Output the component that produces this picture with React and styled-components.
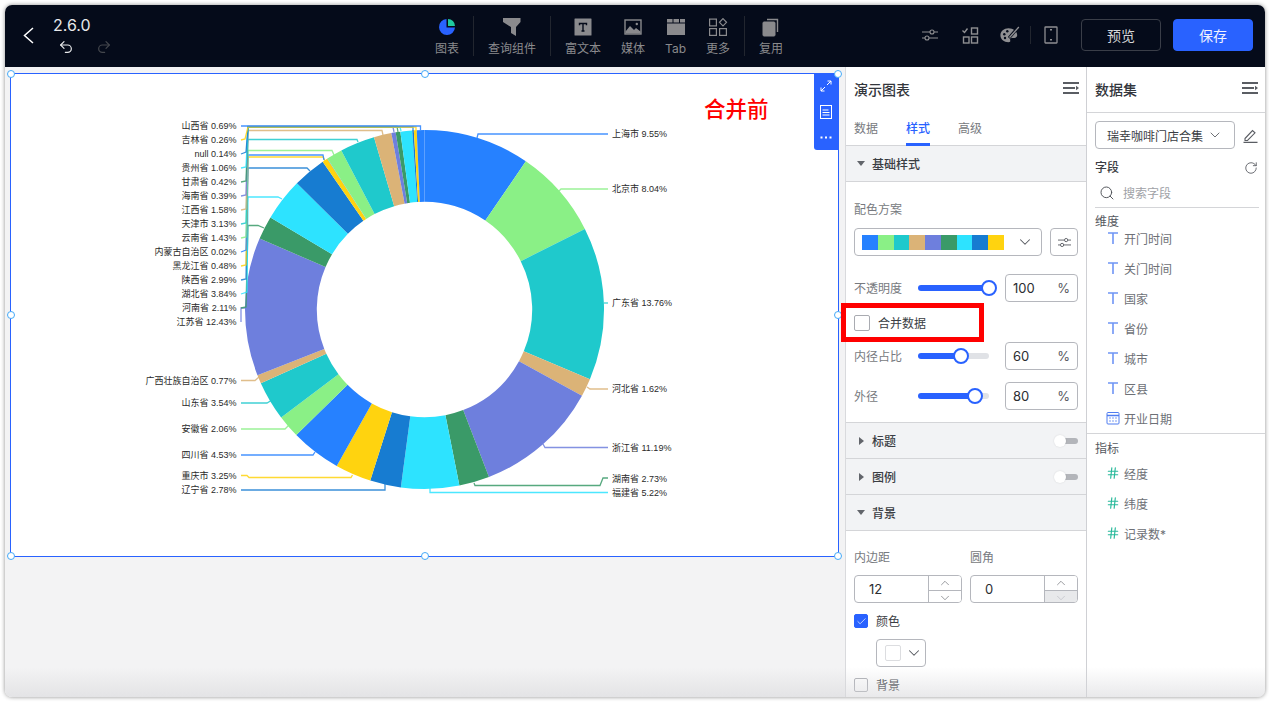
import React from 'react'
import styled, { createGlobalStyle } from 'styled-components'
import { ChevronDown, ChevronUp, Undo2, Redo2, Search, RotateCw, Check, Hash } from 'lucide-react'

const Global = createGlobalStyle`
html, body { margin: 0; height: 702px; overflow: hidden; background: #fff; }
body { font-family: Inter, "Noto Sans CJK SC", sans-serif; font-size: 12px; color: #333; }
* { box-sizing: border-box; }
`

const BLUE = '#2962ff'
const C = {
  blue: '#2681ff', green: '#8af086', teal: '#1fc9cc', tan: '#dbb377', purple: '#6e7fdd',
  dkgreen: '#3a9a68', bright: '#2de3ff', dkblue: '#177cd1', yellow: '#ffd30f',
}
const PALETTE = [C.blue, C.green, C.teal, C.tan, C.purple, C.dkgreen, C.bright, C.dkblue, C.yellow]

// clockwise from 12 o'clock, points are the leader line in page coordinates
const SLICES = [
  ['上海市', 9.55, 'r', 134, [[608, 134], [478, 134], [477, 138]]],
  ['北京市', 8.04, 'r', 189, [[608, 189], [561, 189], [559, 191]]],
  ['广东省', 13.76, 'r', 303, [[608, 303], [604, 303]]],
  ['河北省', 1.62, 'r', 389, [[608, 389], [590, 389], [587, 387]]],
  ['浙江省', 11.19, 'r', 448, [[608, 447.5], [545, 447.5], [543, 444]]],
  ['湖南省', 2.73, 'r', 479, [[608, 478], [603, 478], [600, 485.5], [475, 485.5], [474, 483]]],
  ['福建省', 5.22, 'r', 493, [[608, 492.5], [430, 492.5], [430, 488]]],
  ['辽宁省', 2.78, 'l', 490, [[241, 490], [385, 490], [385, 484]]],
  ['重庆市', 3.25, 'l', 476, [[241, 475.5], [247, 475.5], [249, 477.5], [351, 477.5], [352.5, 475]]],
  ['四川省', 4.53, 'l', 455, [[241, 455], [313, 455], [315, 452]]],
  ['安徽省', 2.06, 'l', 429, [[241, 429], [285, 429], [289, 425]]],
  ['山东省', 3.54, 'l', 403, [[241, 403], [267, 403], [272, 400]]],
  ['广西壮族自治区', 0.77, 'l', 381, [[241, 380.5], [255, 380.5], [259, 377]]],
  ['江苏省', 12.43, 'l', 322, [[241, 322], [241, 308], [246, 308]]],
  ['河南省', 2.11, 'l', 308, [[241, 308], [246, 307], [248, 225.5], [258, 225.5], [264, 228]]],
  ['湖北省', 3.84, 'l', 294, [[241, 294], [247, 292], [248, 197], [278, 197], [282, 199]]],
  ['陕西省', 2.99, 'l', 280, [[241, 280], [246, 279], [248, 168], [307, 168], [310, 171]]],
  ['黑龙江省', 0.48, 'l', 266, [[241, 266], [246, 265], [248, 157], [323, 157], [325, 161]]],
  ['内蒙古自治区', 0.02, 'l', 252, [[241, 252], [246, 250], [248, 155], [323, 155], [324, 160]]],
  ['云南省', 1.43, 'l', 238, [[241, 238], [246, 237], [248, 150.5], [332, 150.5], [334, 155]]],
  ['天津市', 3.13, 'l', 224, [[241, 224], [246, 223], [248, 139.5], [357, 139.5], [358, 142]]],
  ['江西省', 1.58, 'l', 210, [[241, 210], [246, 209], [248, 130.5], [382, 130.5], [383, 135]]],
  ['海南省', 0.39, 'l', 196, [[241, 196], [246, 195], [248, 127], [393, 127], [394, 132]]],
  ['甘肃省', 0.42, 'l', 182, [[241, 182], [246, 181], [248, 126.5], [397, 126.5], [398, 132]]],
  ['贵州省', 1.06, 'l', 168, [[241, 168], [246, 167], [248, 127], [400, 127], [401, 131]]],
  ['null', 0.14, 'l', 154, [[241, 154], [246, 152], [248, 127], [413, 127], [413, 131]]],
  ['吉林省', 0.26, 'l', 140, [[241, 140], [245, 139], [248, 127], [416, 127], [416, 131]]],
  ['山西省', 0.69, 'l', 126, [[241, 126], [420.5, 126], [420.5, 130]]],
]

const CX = 424.5
const CY = 309.5
const R1 = 179.5
const R0 = 107.7

const arcPath = (from, to) => {
  const pt = (r, t) => {
    const a = t * 2 * Math.PI
    return `${(CX + r * Math.sin(a)).toFixed(2)} ${(CY - r * Math.cos(a)).toFixed(2)}`
  }
  const large = to - from > 0.5 ? 1 : 0
  return `M${pt(R1, from)} A${R1} ${R1} 0 ${large} 1 ${pt(R1, to)} L${pt(R0, to)} A${R0} ${R0} 0 ${large} 0 ${pt(R0, from)} Z`
}

const Window = styled.div`
  position: relative;
  margin: 5px 0 0 5px;
  width: 1260px;
  height: 692px;
  border-radius: 7px;
  overflow: hidden;
  display: flex;
  flex-direction: column;
  box-shadow: 0 0 4px rgba(0, 0, 0, 0.45);
  background: #fff;
  &::after {
    content: '';
    position: absolute;
    left: 0;
    right: 0;
    bottom: 0;
    height: 30px;
    background: linear-gradient(rgba(230, 230, 232, 0), rgba(215, 215, 218, 0.55));
    pointer-events: none;
  }
`
const Header = styled.header`
  height: 62px;
  flex: none;
  background: #050b1a;
  display: flex;
  align-items: center;
  color: #fff;
`
const BackZone = styled.div`
  width: 48px;
  padding: 0 0 2px 18px;
  display: flex;
  align-items: center;
  color: #fff;
`
const VersionBox = styled.div`
  width: 372px;
  display: flex;
  flex-direction: column;
  gap: 4px;
  margin-top: -2px;
`
const Version = styled.div`
  font-size: 16px;
  line-height: 20px;
  color: #e8e9eb;
`
const History = styled.div`
  display: flex;
  gap: 22px;
  padding-left: 5px;
  height: 16px;
  align-items: center;
`
const Tools = styled.nav`
  display: flex;
  align-items: center;
  flex: 1;
`
const Tool = styled.div`
  padding: 0 10px;
  display: flex;
  flex-direction: column;
  align-items: center;
  gap: 5px;
  color: #8a8a8d;
  font-size: 12px;
  line-height: 14px;
  svg { display: block; }
`
const ToolDivider = styled.div`
  width: 1px;
  height: 40px;
  margin: 0 4px;
  background: #22262f;
`
const RightDivider = styled(ToolDivider)`
  height: 18px;
  margin: 0;
`
const RightTools = styled.div`
  display: flex;
  align-items: center;
  color: #8f8f92;
  padding: 0 12px 2px 0;
`
const RightIcon = styled.div`
  width: 40px;
  display: flex;
  justify-content: center;
`
const HeaderButton = styled.button`
  width: 80px;
  height: 32px;
  margin-left: ${p => p.$gap}px;
  border-radius: 4px;
  border: 1px solid ${p => (p.$primary ? BLUE : '#3a3e48')};
  background: ${p => (p.$primary ? BLUE : 'transparent')};
  color: ${p => (p.$primary ? '#f0f3ff' : '#d5d6d8')};
  font: 14px Inter, "Noto Sans CJK SC", sans-serif;
`
const Main = styled.main`
  flex: 1;
  display: flex;
  min-height: 0;
`
const Canvas = styled.section`
  width: 840px;
  flex: none;
  background: #f3f3f4;
  padding: 6px 0 0 5px;
`
const Card = styled.div`
  position: relative;
  width: 829px;
  height: 484px;
  background: #fff;
  border: 1px solid ${BLUE};
`
const ChartSvg = styled.svg`
  display: block;
  width: 827px;
  height: 482px;
`
const ChartLabel = styled.text`
  font-family: "Liberation Sans", "Noto Sans CJK SC", sans-serif;
  font-size: 9px;
  fill: #2a2a2a;
`
const Note = styled.div`
  position: absolute;
  left: 693px;
  top: 21px;
  color: #f00;
  font-size: 21.5px;
  line-height: 28px;
  font-weight: 500;
`
const Handle = styled.span`
  position: absolute;
  left: ${p => p.$x}%;
  top: ${p => p.$y}%;
  width: 8px;
  height: 8px;
  margin: -4px 0 0 -4px;
  border-radius: 50%;
  background: #fff;
  border: 1px solid #45aaf8;
`
const FloatBar = styled.div`
  position: absolute;
  right: 0;
  top: 0;
  width: 24px;
  height: 76px;
  background: ${BLUE};
  border-radius: 0 0 0 3px;
  display: flex;
  flex-direction: column;
  align-items: center;
  gap: 13px;
  padding-top: 6px;
  color: #fff;
  svg:last-child { margin-top: 4px; }
`
const Panel = styled.aside`
  width: 241px;
  flex: none;
  border-left: 1px solid #d9dadd;
`
const DataPanel = styled(Panel)`
  width: 179px;
  border-left: 1px solid #cfd0d4;
`
const PanelHead = styled.div`
  height: ${p => p.$h}px;
  display: flex;
  justify-content: space-between;
  padding: 14px 7px 0 8px;
  border-bottom: ${p => (p.$line ? '1px solid #d4d5d8' : 'none')};
`
const PanelTitle = styled.div`
  font-size: 14px;
  line-height: 18px;
  font-weight: 500;
  color: #33363c;
`
const TabRow = styled.div`
  height: 34px;
  display: flex;
  gap: 28px;
  padding-left: 8px;
  border-bottom: 1px solid #d4d5d8;
`
const TabItem = styled.div`
  height: 34px;
  padding-top: 8px;
  line-height: 18px;
  color: ${p => (p.$active ? BLUE : '#777a80')};
  font-weight: ${p => (p.$active ? 500 : 400)};
  border-bottom: 3px solid ${p => (p.$active ? BLUE : 'transparent')};
`
const SectionHead = styled.div`
  height: 36px;
  background: #f2f3f5;
  border-bottom: 1px solid #d4d5d8;
  display: flex;
  align-items: center;
  padding: 0 8px 0 11px;
  font-weight: 500;
  color: #3a3d43;
`
const Caret = styled.span`
  width: 0;
  height: 0;
  margin-right: 7px;
  border-style: solid;
  ${p => (p.$open
    ? 'border-width: 5px 4px 0 4px; border-color: #62656b transparent transparent transparent;'
    : 'border-width: 4px 0 4px 5px; border-color: transparent transparent transparent #62656b; margin-left: 2px; margin-right: 8px;')}
`
const ToggleWrap = styled.div`
  position: relative;
  margin-left: auto;
  width: 24px;
  height: 6px;
  display: flex;
  justify-content: flex-end;
`
const ToggleTrack = styled.span`
  width: 18px;
  height: 6px;
  border-radius: 3px;
  background: #b3b5ba;
`
const ToggleKnob = styled.span`
  position: absolute;
  left: 0;
  top: -3px;
  width: 12px;
  height: 12px;
  border-radius: 50%;
  background: #fff;
  box-shadow: 0 0 2px rgba(0, 0, 0, 0.12);
`
const SectionBody = styled.div`
  padding: 19px 8px 12px;
  border-bottom: 1px solid #d4d5d8;
`
const BgBody = styled.div`
  padding: 18px 8px 0;
`
const FieldLabel = styled.div`
  line-height: 18px;
  color: #777a80;
`
const SchemeRow = styled.div`
  display: flex;
  gap: 8px;
  margin-top: 9px;
  height: 28px;
`
const SchemeSelect = styled.div`
  width: 188px;
  border: 1px solid #b5b7bd;
  border-radius: 4px;
  display: flex;
  align-items: center;
  padding: 0 7px;
  color: #55585e;
  justify-content: space-between;
`
const Swatches = styled.div`
  display: flex;
  width: 142px;
  height: 15px;
`
const Swatch = styled.i`
  flex: 1;
  background: ${p => p.$c};
`
const SquareButton = styled.div`
  width: 28px;
  border: 1px solid #b5b7bd;
  border-radius: 4px;
  display: flex;
  align-items: center;
  justify-content: center;
  color: #55585e;
`
const SliderRow = styled.div`
  display: flex;
  align-items: center;
  height: 28px;
  margin-top: ${p => p.$mt || 0}px;
`
const SliderLabel = styled.div`
  width: 64px;
  color: #777a80;
  margin-top: -1px;
`
const Track = styled.div`
  position: relative;
  width: 71px;
  height: 6px;
  margin-right: 16px;
  border-radius: 3px;
  background: linear-gradient(to right, ${BLUE} ${p => p.$v}%, #e0e2e6 ${p => p.$v}%);
`
const Thumb = styled.span`
  position: absolute;
  left: ${p => p.$v}%;
  top: 50%;
  width: 16px;
  height: 16px;
  transform: translate(-50%, -50%);
  border-radius: 50%;
  background: #fff;
  border: 2px solid ${BLUE};
`
const NumberBox = styled.div`
  width: 73px;
  height: 28px;
  border: 1px solid #b5b7bd;
  border-radius: 4px;
  display: flex;
  align-items: center;
  justify-content: space-between;
  padding: 0 7px;
  font-size: 13px;
  color: #2b2d31;
  span:last-child { color: #55585e; }
`
const MergeRow = styled.div`
  position: relative;
  height: 40px;
  padding-top: 1px;
  display: flex;
  align-items: center;
  gap: 8px;
  color: #3a3d43;
`
const RedBox = styled.div`
  position: absolute;
  left: -13px;
  top: 1px;
  width: 143px;
  height: 39px;
  border: 5px solid #f00;
  pointer-events: none;
`
const CheckBox = styled.span`
  width: ${p => p.$s}px;
  height: ${p => p.$s}px;
  flex: none;
  border-radius: 2px;
  border: 1px solid ${p => (p.$on ? BLUE : '#a9abb1')};
  background: ${p => (p.$on ? BLUE : '#fff')};
  color: #fff;
  display: flex;
  align-items: center;
  justify-content: center;
`
const LabelPair = styled.div`
  display: grid;
  grid-template-columns: 108px 108px;
  gap: 8px 8px;
`
const Stepper = styled.div`
  height: 28px;
  border: 1px solid #b5b7bd;
  border-radius: 4px;
  display: flex;
  overflow: hidden;
`
const StepValue = styled.div`
  flex: 1;
  padding-left: ${p => p.$pad}px;
  line-height: 26px;
  font-size: 13px;
  color: #2b2d31;
`
const StepArrows = styled.div`
  width: 33px;
  border-left: 1px solid #b5b7bd;
  display: flex;
  flex-direction: column;
`
const StepArrow = styled.div`
  flex: 1;
  display: flex;
  align-items: center;
  justify-content: center;
  color: ${p => (p.$off ? '#b5b7bd' : '#55585e')};
  background: ${p => (p.$off ? '#e8e9eb' : '#fff')};
  & + & { border-top: 1px solid #b5b7bd; }
`
const CheckRow = styled.div`
  display: flex;
  align-items: center;
  gap: 8px;
  height: 14px;
  margin-top: 11px;
  color: #3a3d43;
`
const CheckText = styled.span`
  margin-top: -2px;
`
const ColorButton = styled.div`
  width: 50px;
  height: 28px;
  margin: 11px 0 0 22px;
  border: 1px solid #b5b7bd;
  border-radius: 4px;
  display: flex;
  align-items: center;
  padding-left: 8px;
  gap: 4px;
  color: #55585e;
`
const ColorChip = styled.span`
  width: 16px;
  height: 16px;
  background: #fff;
  border: 1px solid #dcdde0;
  border-radius: 2px;
`
const SelectRow = styled.div`
  display: flex;
  align-items: center;
  gap: 8px;
  padding: 8px 0 0 8px;
`
const DataSelect = styled.div`
  width: 140px;
  height: 28px;
  border: 1px solid #b5b7bd;
  border-radius: 4px;
  display: flex;
  align-items: center;
  justify-content: space-between;
  padding: 0 11px;
  color: #3a3d43;
  white-space: nowrap;
`
const FieldsHead = styled.div`
  display: flex;
  justify-content: space-between;
  align-items: center;
  padding: 10px 7px 0 8px;
  height: 28px;
  line-height: 18px;
  font-weight: 500;
  color: #3a3d43;
`
const SearchRow = styled.div`
  margin: 7px 6px 0 8px;
  height: 24px;
  padding: 0 0 6px 4px;
  display: flex;
  align-items: center;
  gap: 8px;
  color: #a0a2a7;
  border-bottom: 1px solid #d4d5d8;
`
const Group = styled.div`
  padding: ${p => p.$top}px 0 0 0;
  height: ${p => (p.$h ? `${p.$h}px` : 'auto')};
  border-bottom: ${p => (p.$h ? '1px solid #d4d5d8' : 'none')};
`
const GroupLabel = styled.div`
  padding-left: 8px;
  line-height: 18px;
  color: #55585e;
`
const ItemList = styled.div`
  margin-top: ${p => p.$mt}px;
`
const Item = styled.div`
  height: 30px;
  padding-left: 18px;
  display: flex;
  align-items: center;
  gap: 3px;
  color: #6d7076;
`
const ItemIcon = styled.span`
  width: 16px;
  display: flex;
  justify-content: center;
  color: ${p => p.$c};
`

const BackIcon = () => (
  <svg width="11" height="17" viewBox="0 0 11 17" fill="none" stroke="currentColor" strokeWidth="1.5">
    <path d="M10 1 1.5 8.5 10 16" />
  </svg>
)
const MenuIcon = () => (
  <svg width="16" height="14" viewBox="0 0 16 14" fill="none" stroke="#5a5d63" strokeWidth="2">
    <path d="M0 2h16M0 7h12M0 12h16" />
    <path d="M13 4.8 16 7l-3 2.2z" fill="#5a5d63" stroke="none" />
  </svg>
)
const TypeT = () => (
  <svg width="10" height="12" viewBox="0 0 10 12" fill="none" stroke="currentColor" strokeWidth="1.6">
    <path d="M0 1h10M5 1v11" />
  </svg>
)
const CalendarIcon = () => (
  <svg width="14" height="14" viewBox="0 0 14 14" fill="none" stroke="currentColor">
    <rect x="1" y="1.5" width="12" height="11.5" rx="1" />
    <path d="M1 4.5h12" strokeWidth="1.5" />
    <path d="M3.5 7h1M6.5 7h1M9.5 7h1M3.5 10h1M6.5 10h1M9.5 10h1" strokeWidth="1.3" />
  </svg>
)
const SlidersIcon = ({ size = 16 }) => (
  <svg width={size} height={size} viewBox="0 0 16 16" fill="none" stroke="currentColor" strokeWidth="1.1">
    <path d="M0 5h8M12 5h4M0 11h3M7 11h9" />
    <circle cx="10" cy="5" r="2" />
    <circle cx="5" cy="11" r="2" />
  </svg>
)
const PieIcon = () => (
  <svg width="20" height="20" viewBox="0 0 20 20">
    <path d="M9.5 2A8 8 0 1 0 18 10.5H9.5z" fill="#2962ff" />
    <path d="M11 2a7 7 0 0 1 7 7h-7z" fill="#1fc9a0" />
  </svg>
)
const FunnelIcon = () => (
  <svg width="18" height="20" viewBox="0 0 18 20" fill="currentColor">
    <path d="M0 1h17.5v4l-4.5 5v9l-5-3v-6L0 5z" />
  </svg>
)
const TextIcon = () => (
  <svg width="18" height="20" viewBox="0 0 18 20">
    <rect x="0.5" y="1.5" width="17" height="17" fill="currentColor" rx="0.5" />
    <path d="M5.5 8.3V6.5h7v1.8M9 6.5v7.5M7.5 14h3" fill="none" stroke="#050b1a" strokeWidth="1.4" />
  </svg>
)
const MediaIcon = () => (
  <svg width="18" height="20" viewBox="0 0 18 20">
    <rect x="1" y="3" width="16" height="14" fill="none" stroke="currentColor" strokeWidth="1.4" />
    <path d="M1.5 14.5 6 9l4 4 2-2 4.5 3.5v2h-15z" fill="currentColor" />
    <circle cx="12.8" cy="7" r="1.2" fill="currentColor" />
  </svg>
)
const TabIcon = () => (
  <svg width="20" height="20" viewBox="0 0 20 20" fill="currentColor">
    <path d="M1 2h5.500v3.500H1zM7.500 2H13v3.500H7.500zM14 2h5v3.500h-5z" />
    <path d="M1 6.500h18V18H1z" />
  </svg>
)
const MoreIcon = () => (
  <svg width="20" height="20" viewBox="0 0 20 20" fill="none" stroke="currentColor" strokeWidth="1.2">
    <rect x="1.6" y="2.1" width="6.8" height="6.8" />
    <rect x="1.6" y="11.6" width="6.8" height="6.8" />
    <rect x="11.6" y="11.6" width="6.8" height="6.8" />
    <path d="m15 1.7 3.500 3.600L15 8.900l-3.500-3.600z" />
  </svg>
)
const CopyIcon = () => (
  <svg width="18" height="20" viewBox="0 0 18 20" fill="none" stroke="currentColor">
    <rect x="1" y="5" width="12" height="14" rx="1" fill="currentColor" />
    <path d="M5 2.500h10.500v12.500" strokeWidth="1.4" />
  </svg>
)
const CheckGridIcon = () => (
  <svg width="17" height="17" viewBox="0 0 17 17" fill="none" stroke="currentColor" strokeWidth="1.4">
    <path d="m0.5 3.500 2 2 3-4" />
    <rect x="9.5" y="1" width="6" height="6" />
    <rect x="1.5" y="10" width="5.5" height="6" />
    <rect x="9.5" y="10" width="6" height="6" />
  </svg>
)
const PaletteIcon = () => (
  <svg width="20" height="18" viewBox="0 0 20 18">
    <path d="M8.5 2.2C4 2.2.4 5.2.4 9.3c0 4 3.6 7 8 7 1.6 0 2.2-1 1.8-2-.5-1.3.3-2.300 1.700-2.300h2.500c1.600 0 2.800-1.200 2.800-2.900 0-3.900-3.800-6.900-8.700-6.900z" fill="currentColor" />
    <circle cx="4.3" cy="8.3" r="1.2" fill="#050b1a" />
    <circle cx="7.3" cy="5.3" r="1.2" fill="#050b1a" />
    <circle cx="5" cy="12" r="1.2" fill="#050b1a" />
    <path d="M9 12 18.5 .8" stroke="#050b1a" strokeWidth="3" />
    <path d="M9.5 11.5 18.8 1" stroke="currentColor" strokeWidth="1.3" />
  </svg>
)
const PhoneIcon = () => (
  <svg width="14" height="18" viewBox="0 0 14 18" fill="none" stroke="currentColor" strokeWidth="1.3">
    <rect x="1" y="1" width="12" height="16" rx="0.5" />
    <path d="M6 3.800h2M6 13.800h2" strokeWidth="1.5" />
  </svg>
)
const EditIcon = () => (
  <svg width="15" height="15" viewBox="0 0 15 15" fill="none" stroke="#5a5d63" strokeWidth="1.1">
    <path d="M2 10.500 9.500 2.500l2.500 2.300-7.500 7.700H2z" />
    <path d="M0.500 14.300h14" strokeWidth="1.2" />
  </svg>
)
const ExpandIcon = () => (
  <svg width="12" height="12" viewBox="0 0 12 12" fill="none" stroke="currentColor">
    <path d="M1 11 5 7M7 5l4-4M7.500 1H11v3.500M1 7.500V11h3.500" />
  </svg>
)
const DocIcon = () => (
  <svg width="12" height="14" viewBox="0 0 12 14" fill="none" stroke="currentColor">
    <rect x="0.5" y="0.5" width="11" height="13" />
    <path d="M2.500 5h6M2.500 7.500h7M2.500 10h7" />
  </svg>
)
const DotsIcon = () => (
  <svg width="12" height="3" viewBox="0 0 12 3" fill="currentColor">
    <rect x="0.5" y="0.5" width="2" height="2" />
    <rect x="5" y="0.5" width="2" height="2" />
    <rect x="9.5" y="0.5" width="2" height="2" />
  </svg>
)

const Donut = () => {
  let acc = 0
  const total = SLICES.reduce((s, d) => s + d[1], 0)
  return (
    <ChartSvg viewBox="11 74 827 482">
      {SLICES.map((d, i) => {
        const from = acc / total
        acc += d[1]
        return <path key={d[0]} d={arcPath(from, acc / total)} fill={PALETTE[i % 9]} />
      })}
      {SLICES.map((d, i) => (
        <polyline key={d[0]} points={d[4].map(p => p.join(',')).join(' ')} fill="none" stroke={PALETTE[i % 9]} strokeOpacity="0.85" strokeWidth="1.3" />
      ))}
      {SLICES.map(d => (
        <ChartLabel key={d[0]} x={d[2] === 'r' ? 612 : 236.5} y={d[3] + 3.2} textAnchor={d[2] === 'r' ? 'start' : 'end'}>
          {d[0]} {d[1].toFixed(2)}%
        </ChartLabel>
      ))}
    </ChartSvg>
  )
}

const HANDLES = [[0, 0], [50, 0], [100, 0], [0, 50], [100, 50], [0, 100], [50, 100], [100, 100]]
const TOOLS = [
  ['图表', PieIcon], null, ['查询组件', FunnelIcon], null, ['富文本', TextIcon], ['媒体', MediaIcon],
  ['Tab', TabIcon], ['更多', MoreIcon], null, ['复用', CopyIcon],
]
const DIMS = ['开门时间', '关门时间', '国家', '省份', '城市', '区县']

const SliderField = ({ label, value, mt }) => (
  <SliderRow $mt={mt}>
    <SliderLabel>{label}</SliderLabel>
    <Track $v={value}><Thumb $v={value} /></Track>
    <NumberBox><span>{value}</span><span>%</span></NumberBox>
  </SliderRow>
)
const Collapsed = ({ title }) => (
  <SectionHead>
    <Caret />{title}
    <ToggleWrap><ToggleTrack /><ToggleKnob /></ToggleWrap>
  </SectionHead>
)
const StepField = ({ value, pad, off }) => (
  <Stepper>
    <StepValue $pad={pad}>{value}</StepValue>
    <StepArrows>
      <StepArrow><ChevronUp size={14} strokeWidth={1} /></StepArrow>
      <StepArrow $off={off}><ChevronDown size={14} strokeWidth={1} /></StepArrow>
    </StepArrows>
  </Stepper>
)

export default function App() {
  return (
    <Window>
      <Global />
      <Header>
        <BackZone><BackIcon /></BackZone>
        <VersionBox>
          <Version>2.6.0</Version>
          <History>
            <Undo2 size={16} strokeWidth={1.8} color="#e8e9eb" />
            <Redo2 size={16} strokeWidth={1.8} color="#44474d" />
          </History>
        </VersionBox>
        <Tools>
          {TOOLS.map((t, i) => (t ? (
            <Tool key={t[0]}>{React.createElement(t[1])}{t[0]}</Tool>
          ) : <ToolDivider key={i} />))}
        </Tools>
        <RightTools>
          <RightIcon><SlidersIcon /></RightIcon>
          <RightIcon><CheckGridIcon /></RightIcon>
          <RightIcon><PaletteIcon /></RightIcon>
          <RightDivider />
          <RightIcon><PhoneIcon /></RightIcon>
          <HeaderButton $gap={10}>预览</HeaderButton>
          <HeaderButton $gap={12} $primary>保存</HeaderButton>
        </RightTools>
      </Header>
      <Main>
        <Canvas>
          <Card>
            <Donut />
            <Note>合并前</Note>
            <FloatBar><ExpandIcon /><DocIcon /><DotsIcon /></FloatBar>
            {HANDLES.map(h => <Handle key={h.join()} $x={h[0]} $y={h[1]} />)}
          </Card>
        </Canvas>
        <Panel>
          <PanelHead $h={45}><PanelTitle>演示图表</PanelTitle><MenuIcon /></PanelHead>
          <TabRow>
            <TabItem>数据</TabItem>
            <TabItem $active>样式</TabItem>
            <TabItem>高级</TabItem>
          </TabRow>
          <SectionHead><Caret $open />基础样式</SectionHead>
          <SectionBody>
            <FieldLabel>配色方案</FieldLabel>
            <SchemeRow>
              <SchemeSelect>
                <Swatches>{PALETTE.map(c => <Swatch key={c} $c={c} />)}</Swatches>
                <ChevronDown size={18} strokeWidth={1.4} />
              </SchemeSelect>
              <SquareButton><SlidersIcon size={13} /></SquareButton>
            </SchemeRow>
            <SliderField label="不透明度" value={100} mt={18} />
            <MergeRow>
              <CheckBox $s={16} />合并数据
              <RedBox />
            </MergeRow>
            <SliderField label="内径占比" value={60} />
            <SliderField label="外径" value={80} mt={12} />
          </SectionBody>
          <Collapsed title="标题" />
          <Collapsed title="图例" />
          <SectionHead><Caret $open />背景</SectionHead>
          <BgBody>
            <LabelPair>
              <FieldLabel>内边距</FieldLabel>
              <FieldLabel>圆角</FieldLabel>
              <StepField value="12" pad={14} />
              <StepField value="0" pad={14} off />
            </LabelPair>
            <CheckRow><CheckBox $s={14} $on><Check size={11} strokeWidth={1.5} /></CheckBox><CheckText>颜色</CheckText></CheckRow>
            <ColorButton><ColorChip /><ChevronDown size={18} strokeWidth={1.4} /></ColorButton>
            <CheckRow><CheckBox $s={14} /><CheckText>背景</CheckText></CheckRow>
          </BgBody>
        </Panel>
        <DataPanel>
          <PanelHead $h={46} $line><PanelTitle>数据集</PanelTitle><MenuIcon /></PanelHead>
          <SelectRow>
            <DataSelect>瑞幸咖啡门店合集<ChevronDown size={16} strokeWidth={1.1} /></DataSelect>
            <EditIcon />
          </SelectRow>
          <FieldsHead>字段<RotateCw size={14} strokeWidth={1.5} color="#5a5d63" /></FieldsHead>
          <SearchRow><Search size={16} strokeWidth={1.4} color="#4a4d53" />搜索字段</SearchRow>
          <Group $top={5} $h={226}>
            <GroupLabel>维度</GroupLabel>
            <ItemList $mt={-8}>
              {DIMS.map(d => <Item key={d}><ItemIcon $c="#6f95f5"><TypeT /></ItemIcon>{d}</Item>)}
              <Item><ItemIcon $c="#4f7cf0"><CalendarIcon /></ItemIcon>开业日期</Item>
            </ItemList>
          </Group>
          <Group $top={6}>
            <GroupLabel>指标</GroupLabel>
            <ItemList $mt={0}>
              {['经度', '纬度', '记录数*'].map(d => (
                <Item key={d}><ItemIcon $c="#27b99a"><Hash size={14} strokeWidth={2} /></ItemIcon>{d}</Item>
              ))}
            </ItemList>
          </Group>
        </DataPanel>
      </Main>
    </Window>
  )
}
